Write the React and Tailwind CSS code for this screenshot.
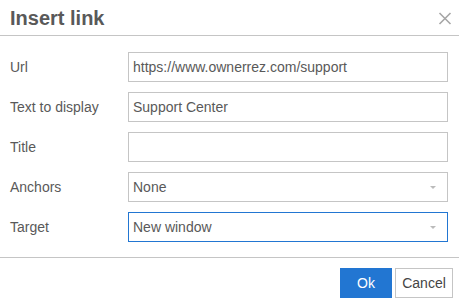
import React from 'react'

const font = { fontFamily: '"Liberation Sans", Arial, sans-serif' }

function Field({ label, value, select, focused }) {
  return (
    <div className="flex items-center h-[30px]">
      <label className="w-[118px] text-[14px] text-[#595959]">{label}</label>
      <div
        className={`relative flex-1 h-[30px] border bg-white flex items-center pl-[4px] text-[14px] text-[#595959] ${focused ? 'border-[#2276d2]' : 'border-[#c5c5c5]'}`}
      >
        {value}
        {select && (
          <span className="absolute right-[11px] top-[13px] w-0 h-0 border-l-[3px] border-r-[3px] border-t-[3px] border-l-transparent border-r-transparent border-t-[#bbb]" />
        )}
      </div>
    </div>
  )
}

export default function App() {
  return (
    <div className="w-[459px] h-[305px] bg-white flex flex-col" style={font}>
      <div className="h-[36px] flex items-center justify-between pl-[10px] pr-[7px] border-b border-[#c5c5c5]">
        <h1 className="text-[20px] font-bold text-[#595959]">Insert link</h1>
        <svg width="14" height="13" viewBox="0 0 14 13" className="mt-[1px]">
          <path d="M1.5 1L12.5 12M12.5 1L1.5 12" stroke="#a6a6a6" strokeWidth="1.6" />
        </svg>
      </div>
      <div className="flex flex-col gap-[10px] pt-[16px] pb-[15px] pl-[10px] pr-[11px] border-b border-[#c5c5c5]">
        <Field label="Url" value="https://www.ownerrez.com/support" />
        <Field label="Text to display" value="Support Center" />
        <Field label="Title" value="" />
        <Field label="Anchors" value="None" select />
        <Field label="Target" value="New window" select focused />
      </div>
      <div className="flex justify-end gap-[3px] pt-[10px] pr-[6px]">
        <button className="w-[52px] h-[30px] bg-[#2276d2] text-white text-[14px]">Ok</button>
        <button className="w-[58px] h-[30px] border border-[#c5c5c5] bg-white text-[#444] text-[14px]">Cancel</button>
      </div>
    </div>
  )
}
